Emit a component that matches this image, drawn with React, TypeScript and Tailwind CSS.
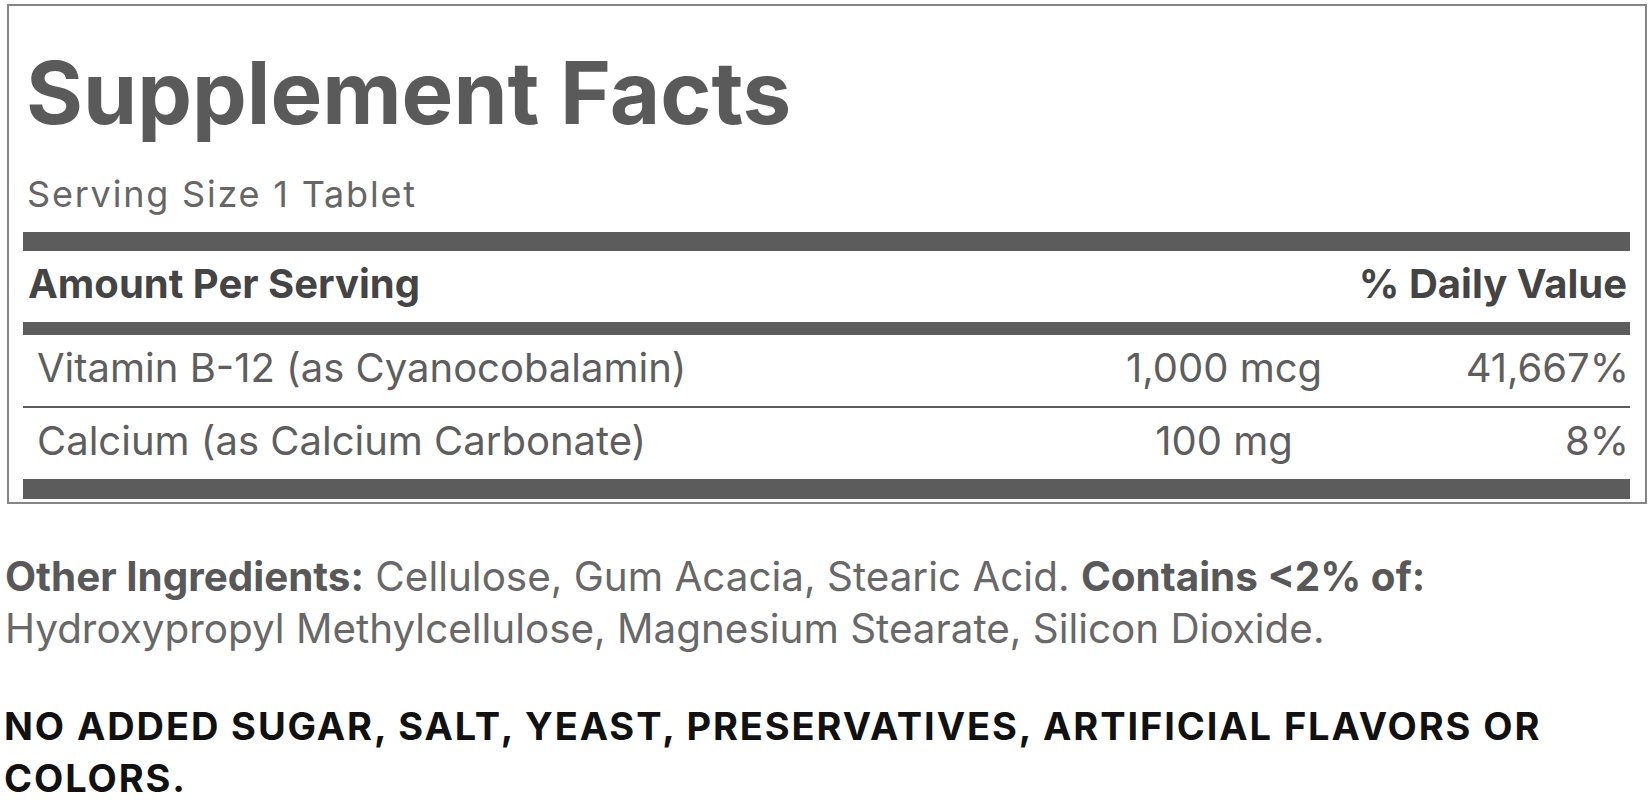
import React from "react";

const font = { fontFamily: '"Inter", "Noto Sans", sans-serif' };

function Row({ name, amount, dv }: { name: string; amount: string; dv: string }) {
  return (
    <div className="flex items-center pt-[13px] pb-[18px] pl-[14px] pr-[1px] text-[40px] leading-[40px] text-[#5e5e5e]">
      <span className="flex-1">{name}</span>
      <span className="w-[300px] text-center">{amount}</span>
      <span className="w-[255px] text-right">{dv}</span>
    </div>
  );
}

export default function App() {
  return (
    <div className="h-[800px] w-[1652px] overflow-hidden bg-white" style={font}>
      <div className="ml-[7px] mt-[4px] w-[1640px] border-2 border-[#858585] pl-[14px] pr-[15px] pt-[43px] pb-[3px]">
        <h1 className="pl-[3px] text-[87px] leading-[87px] font-bold text-[#5a5a5a]">Supplement Facts</h1>
        <div className="mt-[40px] mb-[20px] pl-[4px] text-[36px] leading-[36px] tracking-[1.8px] text-[#666666]">
          Serving Size 1 Tablet
        </div>
        <div className="h-[19px] bg-[#5c5c5c]" />
        <div className="flex justify-between pt-[13px] pb-[18px] pl-[5px] pr-[3px] text-[40px] leading-[40px] font-bold text-[#444444]">
          <span>Amount Per Serving</span>
          <span>% Daily Value</span>
        </div>
        <div className="h-[13px] bg-[#5c5c5c]" />
        <Row name="Vitamin B-12 (as Cyanocobalamin)" amount="1,000 mcg" dv="41,667%" />
        <div className="h-[2px] bg-[#5c5c5c]" />
        <Row name="Calcium (as Calcium Carbonate)" amount="100 mg" dv="8%" />
        <div className="h-[20px] bg-[#5c5c5c]" />
      </div>
      <p className="mt-[47px] pl-[5px] text-[40.4px] leading-[52px] text-[#686868]">
        <span className="font-bold text-[#585858]">Other Ingredients:</span> Cellulose, Gum Acacia, Stearic Acid.{" "}
        <span className="font-bold text-[#585858]">Contains &lt;2% of:</span>
        <br />
        Hydroxypropyl Methylcellulose, Magnesium Stearate, Silicon Dioxide.
      </p>
      <p className="mt-[45px] pl-[4px] text-[38px] leading-[52px] tracking-[1.9px] font-bold text-[#111111]">
        NO ADDED SUGAR, SALT, YEAST, PRESERVATIVES, ARTIFICIAL FLAVORS OR
        <br />
        COLORS.
      </p>
    </div>
  );
}
